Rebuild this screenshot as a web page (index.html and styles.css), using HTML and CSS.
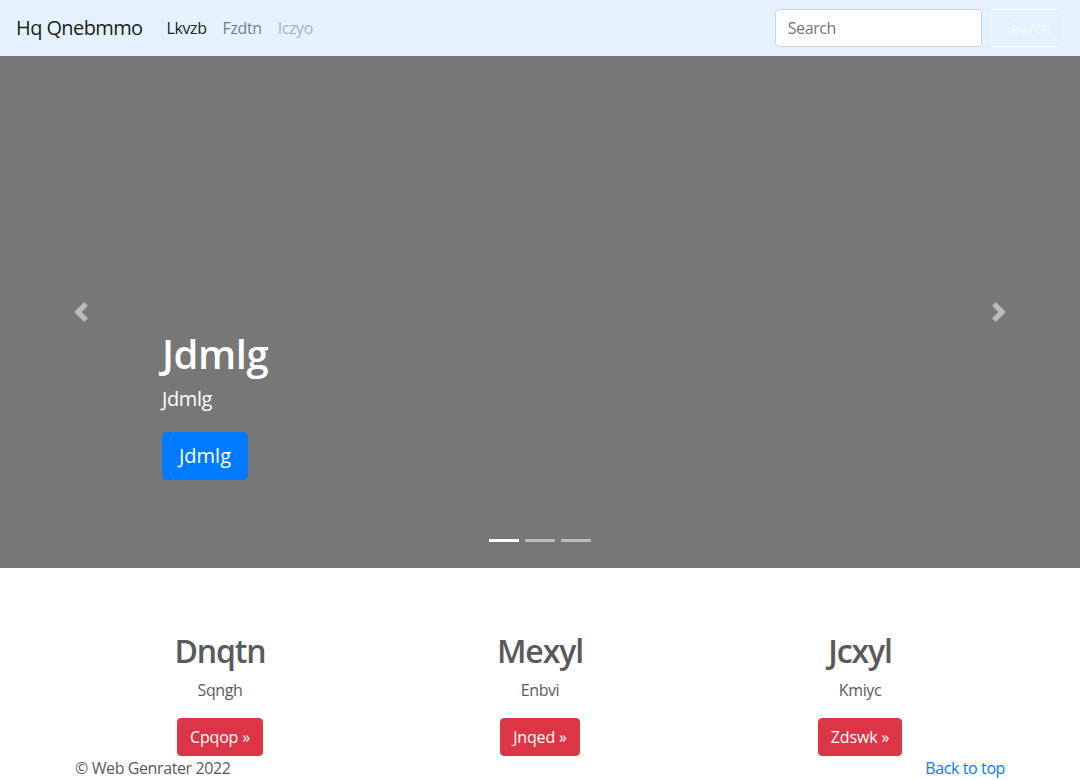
FILE: index.html
```html
<!DOCTYPE html>
<html lang="en">
<head>
<meta charset="utf-8">
<title>Carousel</title>
<link rel="stylesheet" href="styles.css">
</head>
<body>
<header class="navbar">
  <a class="brand" href="#">Hq Qnebmmo</a>
  <nav class="nav">
    <a class="nav-link active" href="#">Lkvzb</a>
    <a class="nav-link" href="#">Fzdtn</a>
    <a class="nav-link disabled" href="#">Iczyo</a>
  </nav>
  <form class="search">
    <input class="search-input" type="text" placeholder="Search">
    <button class="btn-outline" type="button">Search</button>
  </form>
</header>

<section class="carousel">
  <div class="slide"></div>
  <div class="caption">
    <h1 class="caption-title">Jdmlg</h1>
    <p class="caption-text">Jdmlg</p>
    <p class="caption-action"><a class="btn-lg" href="#">Jdmlg</a></p>
  </div>
  <a class="control control-prev" href="#">
    <svg class="control-icon" viewBox="0 0 8 8"><path d="M5.25 0l-4 4 4 4 1.5-1.5L4.25 4l2.5-2.5L5.25 0z" fill="#fff"/></svg>
  </a>
  <a class="control control-next" href="#">
    <svg class="control-icon" viewBox="0 0 8 8"><path d="M2.75 0l-1.5 1.5L3.75 4l-2.5 2.5L2.75 8l4-4-4-4z" fill="#fff"/></svg>
  </a>
  <ol class="indicators">
    <li class="indicator active"></li>
    <li class="indicator"></li>
    <li class="indicator"></li>
  </ol>
</section>

<main class="container marketing">
  <div class="row">
    <div class="col">
      <h2 class="col-title">Dnqtn</h2>
      <p class="col-text">Sqngh</p>
      <p class="col-action"><a class="btn-danger" href="#">Cpqop &raquo;</a></p>
    </div>
    <div class="col">
      <h2 class="col-title">Mexyl</h2>
      <p class="col-text">Enbvi</p>
      <p class="col-action"><a class="btn-danger" href="#">Jnqed &raquo;</a></p>
    </div>
    <div class="col">
      <h2 class="col-title">Jcxyl</h2>
      <p class="col-text">Kmiyc</p>
      <p class="col-action"><a class="btn-danger" href="#">Zdswk &raquo;</a></p>
    </div>
  </div>
</main>

<footer class="container footer">
  <p class="copy">&copy; Web Genrater 2022</p>
  <a class="top-link" href="#">Back to top</a>
</footer>
</body>
</html>
```

FILE: styles.css
```css
* { box-sizing: border-box; }

body {
  margin: 0;
  font-family: "Open Sans", "Noto Sans", sans-serif;
  font-size: 16px;
  line-height: 1.5;
  letter-spacing: -0.025em;
  color: #5a5a5a;
  background: #fff;
}

a { text-decoration: none; }

.navbar {
  display: flex;
  align-items: center;
  height: 56px;
  padding: 8px 16px;
  background: #e3f2fd;
}

.brand {
  font-size: 20px;
  line-height: 30px;
  padding: 5px 0;
  margin-right: 16px;
  letter-spacing: -0.03em;
  color: rgba(0, 0, 0, 0.9);
  white-space: nowrap;
}

.nav {
  display: flex;
  flex: 1;
}

.nav-link {
  padding: 8px;
  color: rgba(0, 0, 0, 0.5);
}

.nav-link.active { color: rgba(0, 0, 0, 0.9); }
.nav-link.disabled { color: rgba(0, 0, 0, 0.3); }

.search {
  display: flex;
  align-items: center;
}

.search-input {
  width: 207px;
  height: 38px;
  padding: 6px 12px;
  margin-right: 8px;
  font-family: inherit;
  font-size: 16px;
  letter-spacing: inherit;
  color: #495057;
  background: #fff;
  border: 1px solid #ced4da;
  border-radius: 4px;
  outline: none;
}

.search-input::placeholder { color: #6c757d; }

.btn-outline {
  height: 38px;
  padding: 6px 12px;
  font-family: inherit;
  font-size: 16px;
  letter-spacing: inherit;
  line-height: 24px;
  color: #f8f9fa;
  background: transparent;
  border: 1px solid #f8f9fa;
  border-radius: 4px;
}

.carousel {
  position: relative;
  height: 512px;
  margin-bottom: 64px;
  background: #777;
}

.slide {
  height: 100%;
}

.caption {
  position: absolute;
  left: 15%;
  right: 15%;
  bottom: 52px;
  padding: 20px 0;
  color: #fff;
  text-align: left;
  z-index: 10;
}

.caption-title {
  margin: 0 0 8px;
  font-size: 40px;
  font-weight: 600;
  line-height: 45px;
}

.caption-text {
  margin: 0 0 18px;
  font-size: 20px;
  line-height: 30px;
}

.caption-action {
  margin: 0 0 16px;
  line-height: 48px;
  height: 48px;
}

.btn-lg {
  display: inline-block;
  padding: 8px 16px;
  font-size: 20px;
  line-height: 30px;
  letter-spacing: normal;
  color: #fff;
  background: #007bff;
  border: 1px solid #007bff;
  border-radius: 5px;
  vertical-align: top;
}

.control {
  position: absolute;
  top: 0;
  bottom: 0;
  width: 15%;
  display: flex;
  align-items: center;
  justify-content: center;
  opacity: 0.5;
}

.control-prev { left: 0; }
.control-next { right: 0; }

.control-icon {
  width: 20px;
  height: 20px;
}

.indicators {
  position: absolute;
  left: 0;
  right: 0;
  bottom: 0;
  display: flex;
  justify-content: center;
  margin: 0 0 16px;
  padding: 0;
  list-style: none;
}

.indicator {
  width: 30px;
  height: 3px;
  margin: 0 3px;
  box-sizing: content-box;
  border-top: 10px solid transparent;
  border-bottom: 10px solid transparent;
  background: #fff;
  background-clip: padding-box;
  opacity: 0.5;
}

.indicator.active { opacity: 1; }

.container {
  width: 960px;
  margin: 0 auto;
  padding: 0 15px;
}

.row {
  display: flex;
  margin: 0 -15px;
}

.col {
  flex: 1;
  padding: 0 15px;
  text-align: center;
}

.col-title {
  margin: 0 0 8px;
  font-size: 32px;
  font-weight: 600;
  line-height: 38px;
  letter-spacing: -0.035em;
}

.col-text {
  margin: 0 12px 16px;
}

.col-action {
  margin: 0 12px;
  height: 38px;
}

.btn-danger {
  display: inline-block;
  padding: 6px 12px;
  font-size: 16px;
  line-height: 24px;
  letter-spacing: -0.01em;
  color: #fff;
  background: #dc3545;
  border: 1px solid #dc3545;
  border-radius: 4px;
  vertical-align: top;
}

.footer {
  display: flex;
  justify-content: space-between;
  align-items: center;
}

.copy {
  margin: 0;
}

.top-link {
  color: #007bff;
}
```
